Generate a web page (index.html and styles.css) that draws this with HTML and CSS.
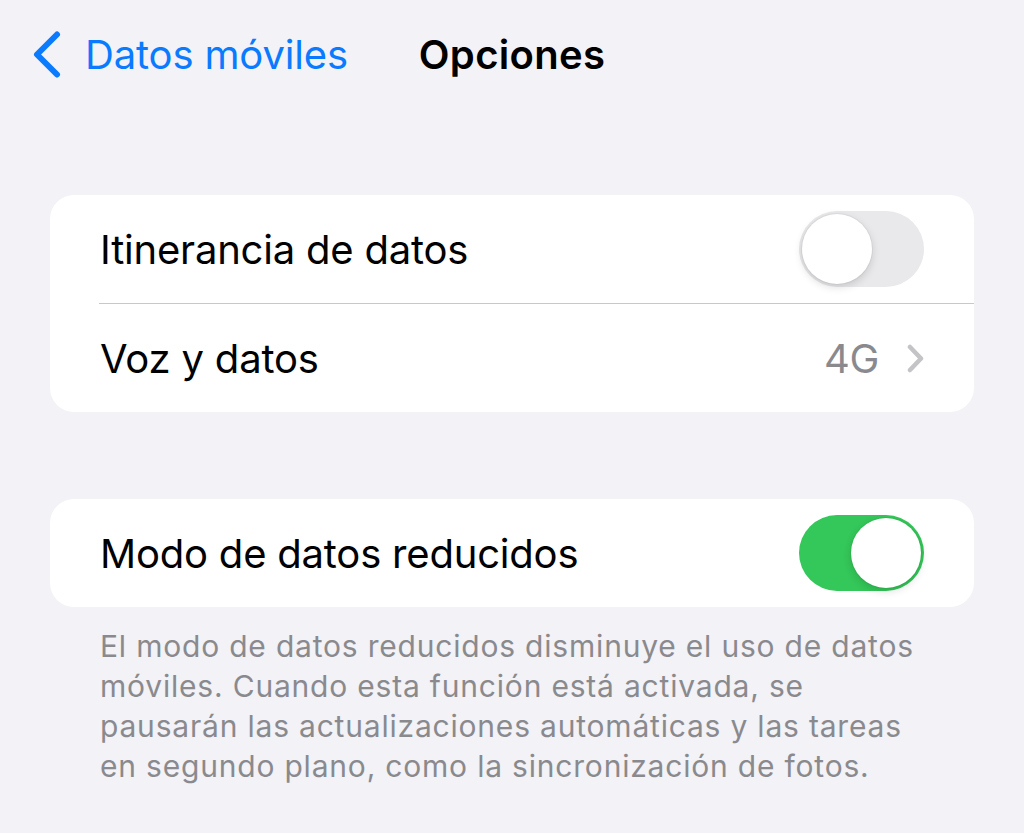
FILE: index.html
```html
<!DOCTYPE html>
<html lang="es">
<head>
<meta charset="utf-8">
<title>Opciones</title>
<link rel="stylesheet" href="styles.css">
</head>
<body>
<header class="nav">
  <a class="back" href="#">
    <svg class="back-chev" width="30" height="47" viewBox="0 0 30 47" aria-hidden="true">
      <path d="M25 3.5 L5 23.5 L25 43.5" fill="none" stroke="#0a7aff" stroke-width="6" stroke-linecap="round" stroke-linejoin="round"/>
    </svg>
    <span class="back-label">Datos móviles</span>
  </a>
  <h1 class="title">Opciones</h1>
  <div class="spacer"></div>
</header>

<main class="content">
  <section class="group">
    <div class="row">
      <span class="label">Itinerancia de datos</span>
      <span class="switch"><span class="knob"></span></span>
    </div>
    <div class="row">
      <span class="label">Voz y datos</span>
      <span class="detail">4G
        <svg class="chev" width="19" height="29" viewBox="0 0 19 29" aria-hidden="true">
          <path d="M4 3 L15 14.5 L4 26" fill="none" stroke="#c4c4c7" stroke-width="4.5" stroke-linecap="round" stroke-linejoin="round"/>
        </svg>
      </span>
    </div>
  </section>

  <section class="group second">
    <div class="row">
      <span class="label">Modo de datos reducidos</span>
      <span class="switch on"><span class="knob"></span></span>
    </div>
  </section>
  <p class="footer">El modo de datos reducidos disminuye el uso de datos<br>móviles. Cuando esta función está activada, se<br>pausarán las actualizaciones automáticas y las tareas<br>en segundo plano, como la sincronización de fotos.</p>
</main>
</body>
</html>
```

FILE: styles.css
```css
* { box-sizing: border-box; }

html, body {
  margin: 0;
  padding: 0;
  background: #f2f2f7;
}

body {
  font-family: Inter, "Noto Sans", "Liberation Sans", sans-serif;
  color: #000;
  width: 1024px;
  height: 833px;
  overflow: hidden;
}

.nav {
  height: 108px;
  display: grid;
  grid-template-columns: 1fr auto 1fr;
  align-items: center;
}

.back {
  display: flex;
  align-items: center;
  gap: 23px;
  padding-left: 32px;
  text-decoration: none;
  color: #0a7aff;
}

.back-chev { display: block; }

.back-label {
  font-size: 40px;
  letter-spacing: -0.15px;
  white-space: nowrap;
}

.title {
  margin: 0;
  font-size: 40px;
  font-weight: 600;
  letter-spacing: 0.3px;
}

.content {
  padding: 87px 50px 0 50px;
}

.group {
  background: #fff;
  border-radius: 24px;
  overflow: hidden;
}

.group.second {
  margin-top: 87px;
}

.row {
  height: 108px;
  display: flex;
  align-items: center;
  justify-content: space-between;
  padding: 0 50px;
}

.row + .row {
  border-top: 1.5px solid #c8c8cc;
  margin-left: 49px;
  padding-left: 1px;
  height: 109px;
}

.label {
  font-size: 40px;
  letter-spacing: -0.2px;
}

.detail {
  display: flex;
  align-items: center;
  gap: 27px;
  font-size: 40px;
  letter-spacing: -0.4px;
  color: #8a8a8e;
  margin-right: -1px;
}

.chev { display: block; }

.switch {
  width: 125px;
  height: 76px;
  border-radius: 38px;
  background: #e9e9eb;
  padding: 3px;
  display: flex;
  justify-content: flex-start;
}

.switch.on {
  background: #34c759;
  justify-content: flex-end;
}

.knob {
  width: 70px;
  height: 70px;
  border-radius: 50%;
  background: #fff;
  box-shadow: 0 3px 8px rgba(0, 0, 0, 0.15), 0 0 0 1px rgba(0, 0, 0, 0.04);
}

.footer {
  margin: 19px 0 0 0;
  padding-left: 50px;
  font-size: 30px;
  line-height: 40px;
  color: #8a8a8e;
  letter-spacing: 0.8px;
  white-space: nowrap;
}
```
